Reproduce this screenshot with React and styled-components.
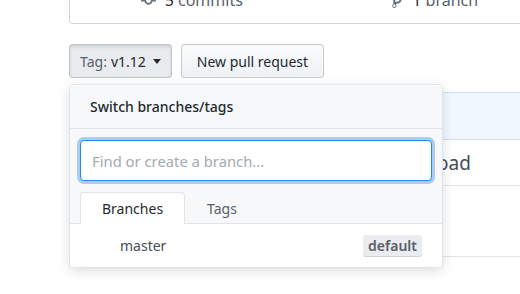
import React from 'react'
import styled, { createGlobalStyle } from 'styled-components'

const GlobalStyle = createGlobalStyle`
  html, body {
    margin: 0;
    padding: 0;
    height: 100%;
    background: #fff;
    overflow: hidden;
  }
  body {
    font-family: "Segoe UI", "Noto Sans", "Liberation Sans", sans-serif;
    color: #24292e;
    font-size: 14px;
  }
`

const CommitIcon = () => (
  <svg width="15" height="17" viewBox="0 0 14 16" fill="#6a737d">
    <path d="M10.86 7c-.45-1.72-2-3-3.86-3-1.86 0-3.41 1.28-3.86 3H0v2h3.14c.45 1.72 2 3 3.86 3 1.86 0 3.41-1.28 3.86-3H14V7h-3.14zM7 10.2c-1.22 0-2.2-.98-2.2-2.2 0-1.22.98-2.2 2.2-2.2 1.22 0 2.2.98 2.2 2.2 0 1.22-.98 2.2-2.2 2.2z" />
  </svg>
)

const BranchIcon = () => (
  <svg width="11" height="17" viewBox="0 0 10 16" fill="#6a737d">
    <path d="M10 5c0-1.11-.89-2-2-2a1.993 1.993 0 0 0-1 3.72v.3c-.02.52-.23.98-.63 1.38-.4.4-.86.61-1.38.63-.83.02-1.48.16-2 .45V4.72a1.993 1.993 0 0 0-1-3.72C.88 1 0 1.89 0 3a2 2 0 0 0 1 1.72v6.56c-.59.35-1 .99-1 1.72 0 1.11.89 2 2 2 1.11 0 2-.89 2-2 0-.53-.2-1-.53-1.36.09-.06.48-.41.59-.47.25-.11.56-.17.94-.17 1.05-.05 1.95-.45 2.75-1.25S8.95 7.77 9 6.73h-.02C9.59 6.37 10 5.73 10 5zM2 1.8c.66 0 1.2.55 1.2 1.2 0 .65-.55 1.2-1.2 1.2C1.35 4.2.8 3.65.8 3c0-.65.55-1.2 1.2-1.2zm0 12.41c-.66 0-1.2-.55-1.2-1.2 0-.65.55-1.2 1.2-1.2.65 0 1.2.55 1.2 1.2 0 .65-.55 1.2-1.2 1.2zm6-8c-.66 0-1.2-.55-1.2-1.2 0-.65.55-1.2 1.2-1.2.65 0 1.2.55 1.2 1.2 0 .65-.55 1.2-1.2 1.2z" />
  </svg>
)

const Repo = styled.div`
  margin-left: 69px;
  width: 976px;
`

const Summary = styled.ul`
  display: flex;
  margin: -34px 0 0;
  padding: 24px 0 13px;
  list-style: none;
  border: 1px solid #d1d5da;
  border-top: none;
  border-radius: 0 0 4px 4px;
`

const SummaryItem = styled.li`
  flex: 1;
  display: flex;
  justify-content: center;
  align-items: center;
  gap: 9px;
  height: 20px;
  font-size: 16px;
  color: #586069;

  strong {
    color: #24292e;
    font-weight: 400;
  }
`

const Toolbar = styled.div`
  display: flex;
  gap: 9px;
  margin-top: 20px;
`

const SelectWrap = styled.div`
  position: relative;
`

const Button = styled.button`
  height: 34px;
  padding: 0 ${({ $pressed }) => ($pressed ? 10 : 15)}px;
  font: inherit;
  font-size: 14px;
  color: #24292e;
  border: 1px solid rgba(27, 31, 35, 0.2);
  border-radius: 4px;
  background: ${({ $pressed }) =>
    $pressed ? '#e9ecef' : 'linear-gradient(-180deg, #fafbfc 0%, #eff3f6 90%)'};
  box-shadow: ${({ $pressed }) =>
    $pressed ? 'inset 0 2px 3px rgba(27,31,35,0.12)' : 'none'};
  display: flex;
  align-items: center;
  gap: 4px;
`

const Muted = styled.span`
  color: #586069;
`

const Caret = styled.span`
  display: inline-block;
  border-top: 5px solid #24292e;
  border-left: 4.5px solid transparent;
  border-right: 4.5px solid transparent;
  margin-left: 3px;
`

const Menu = styled.div`
  position: absolute;
  top: 40px;
  left: 0;
  width: 372px;
  z-index: 10;
  background: #fff;
  border: 1px solid #e1e4e8;
  border-radius: 4px;
  box-shadow: 0 3px 12px rgba(27, 31, 35, 0.15);
  overflow: hidden;
`

const MenuHeader = styled.div`
  height: 43px;
  display: flex;
  align-items: center;
  padding-left: 20px;
  background: #f6f8fa;
  border-bottom: 1px solid #e1e4e8;
  font-size: 14px;
  font-weight: 500;
`

const Filter = styled.div`
  padding: 11px 10px 0;
  background: #f6f8fa;
`

const FilterInput = styled.input`
  box-sizing: border-box;
  width: 100%;
  height: 41px;
  padding: 0 11px;
  font: inherit;
  font-size: 14.8px;
  color: #24292e;
  border: 1px solid #2188ff;
  border-radius: 4px;
  outline: none;
  box-shadow: 0 0 0 3px rgba(3, 102, 214, 0.3);

  &::placeholder {
    color: #a3aab1;
  }
`

const Tabs = styled.div`
  display: flex;
  padding: 11px 10px 0;
  background: #f6f8fa;
  border-bottom: 1px solid #e1e4e8;
`

const Tab = styled.div`
  height: 31px;
  padding: 0 21px;
  display: flex;
  align-items: center;
  font-size: 14px;
  margin-bottom: -1px;
  color: ${({ $active }) => ($active ? '#24292e' : '#586069')};
  background: ${({ $active }) => ($active ? '#fff' : 'transparent')};
  border: 1px solid ${({ $active }) => ($active ? '#e1e4e8' : 'transparent')};
  border-bottom: none;
  border-radius: 4px 4px 0 0;
`

const Item = styled.div`
  height: 43px;
  display: flex;
  align-items: center;
  justify-content: space-between;
  padding: 0 20px 0 50px;
  font-size: 14px;
  color: #444d56;
`

const Badge = styled.span`
  padding: 1px 5px 2px;
  font-size: 14px;
  font-weight: 600;
  color: #586069;
  background: #eaecef;
  border-radius: 3px;
  box-shadow: inset 0 -1px 0 rgba(27, 31, 35, 0.12);
`

const Files = styled.div`
  margin-top: 14px;
  border-bottom: 1px solid #e1e4e8;
`

const CommitBar = styled.div`
  height: 46px;
  background: #f1f8ff;
  border-top: 1px solid #c8e1ff;
  border-bottom: 1px solid #c8e1ff;
`

const FileRow = styled.div`
  height: ${({ $h }) => $h}px;
  display: flex;
  align-items: center;
  padding-left: 228px;
  font-size: 19px;
  color: #444d56;
  border-bottom: ${({ $last }) => ($last ? 'none' : '1px solid #e1e4e8')};
`

export default function App() {
  return (
    <>
      <GlobalStyle />
      <Repo>
        <Summary>
          <SummaryItem>
            <CommitIcon />
            <span>
              <strong>5</strong> commits
            </span>
          </SummaryItem>
          <SummaryItem>
            <BranchIcon />
            <span>
              <strong>1</strong> branch
            </span>
          </SummaryItem>
          <SummaryItem />
          <SummaryItem />
        </Summary>

        <Toolbar>
          <SelectWrap>
            <Button $pressed>
              <Muted>Tag:</Muted> v1.12 <Caret />
            </Button>
            <Menu>
              <MenuHeader>Switch branches/tags</MenuHeader>
              <Filter>
                <FilterInput placeholder="Find or create a branch..." />
              </Filter>
              <Tabs>
                <Tab $active>Branches</Tab>
                <Tab>Tags</Tab>
              </Tabs>
              <Item>
                <span>master</span>
                <Badge>default</Badge>
              </Item>
            </Menu>
          </SelectWrap>
          <Button>New pull request</Button>
        </Toolbar>

        <Files>
          <CommitBar />
          <FileRow $h={45}>Add files via upload</FileRow>
          <FileRow $h={70} $last />
        </Files>
      </Repo>
    </>
  )
}
